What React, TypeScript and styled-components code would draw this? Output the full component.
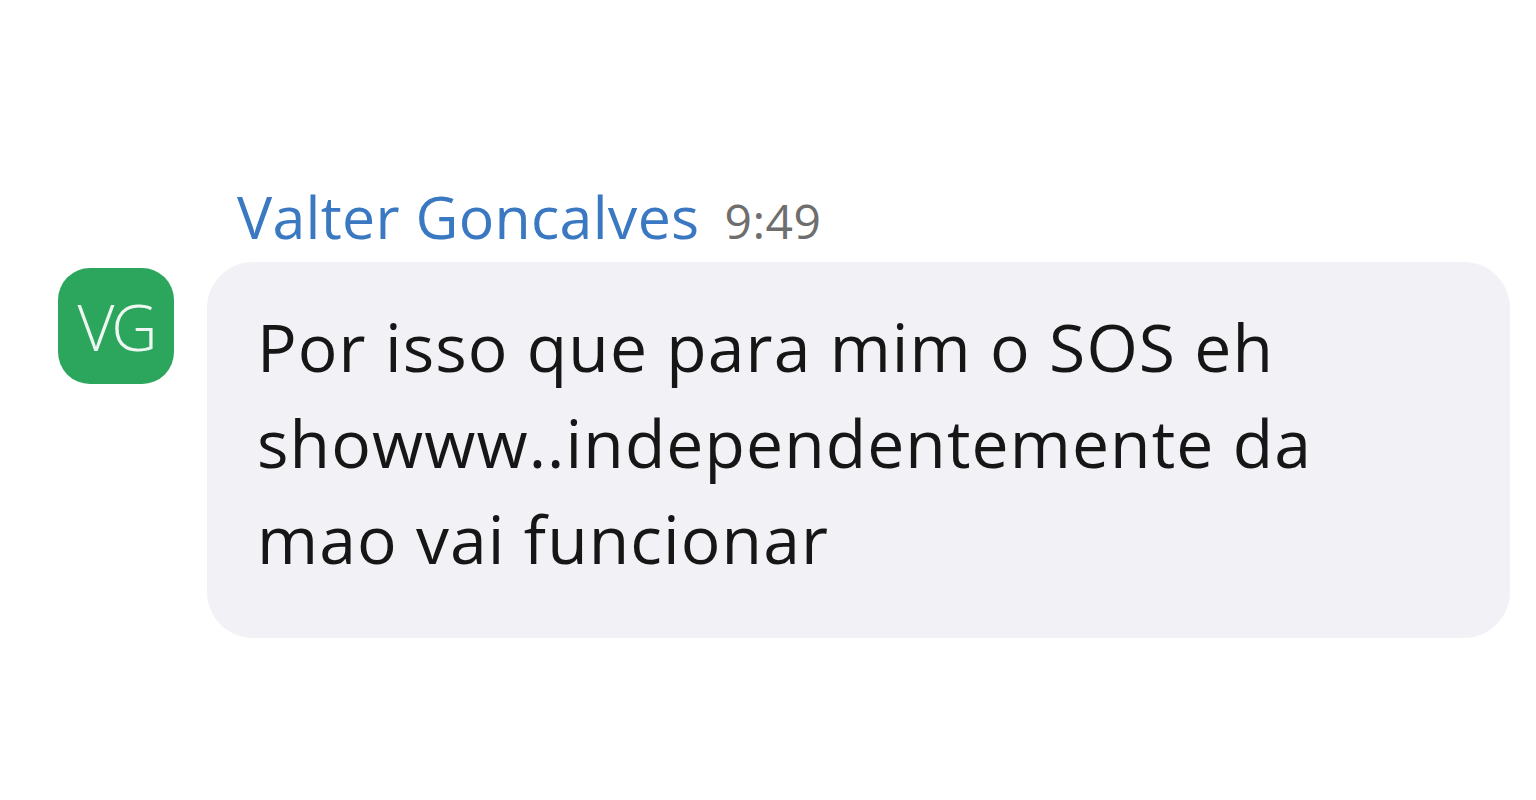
import styled, { createGlobalStyle } from 'styled-components';

const GlobalStyle = createGlobalStyle`
  html, body {
    margin: 0;
    padding: 0;
    background: #ffffff;
  }
  body {
    font-family: 'Open Sans', 'Noto Sans', sans-serif;
  }
`;

const Page = styled.div`
  width: 1536px;
  height: 800px;
  overflow: hidden;
  background: #fff;
`;

const Message = styled.div`
  display: grid;
  grid-template-columns: 116px 1303px;
  column-gap: 33px;
  padding: 176px 0 0 58px;
`;

const Header = styled.div`
  grid-column: 2;
  display: flex;
  align-items: baseline;
  gap: 25px;
  padding-left: 30px;
  height: 86px;
`;

const Name = styled.span`
  font-size: 59px;
  color: #3a78c2;
  letter-spacing: 0.3px;
`;

const Time = styled.span`
  font-size: 48px;
  color: #6e6e6e;
  letter-spacing: 0.5px;
`;

const Avatar = styled.div`
  grid-column: 1;
  grid-row: 2;
  margin-top: 6px;
  width: 116px;
  height: 116px;
  border-radius: 32px;
  background: #2ba65c;
  color: #eef7f1;
  display: flex;
  align-items: center;
  justify-content: center;
  font-size: 64px;
  font-weight: 300;
  letter-spacing: -3px;
`;

const Bubble = styled.div`
  grid-column: 2;
  grid-row: 2;
  background: #f2f1f6;
  border-radius: 46px;
  padding: 36px 50px 0 50px;
  height: 376px;
  box-sizing: border-box;
  font-size: 66px;
  line-height: 96px;
  letter-spacing: 1.1px;
  color: #161616;
`;

export default function App() {
  return (
    <Page>
      <GlobalStyle />
      <Message>
        <Header>
          <Name>Valter Goncalves</Name>
          <Time>9:49</Time>
        </Header>
        <Avatar>VG</Avatar>
        <Bubble>
          Por isso que para mim o SOS eh
          <br />
          showww..independentemente da
          <br />
          mao vai funcionar
        </Bubble>
      </Message>
    </Page>
  );
}
